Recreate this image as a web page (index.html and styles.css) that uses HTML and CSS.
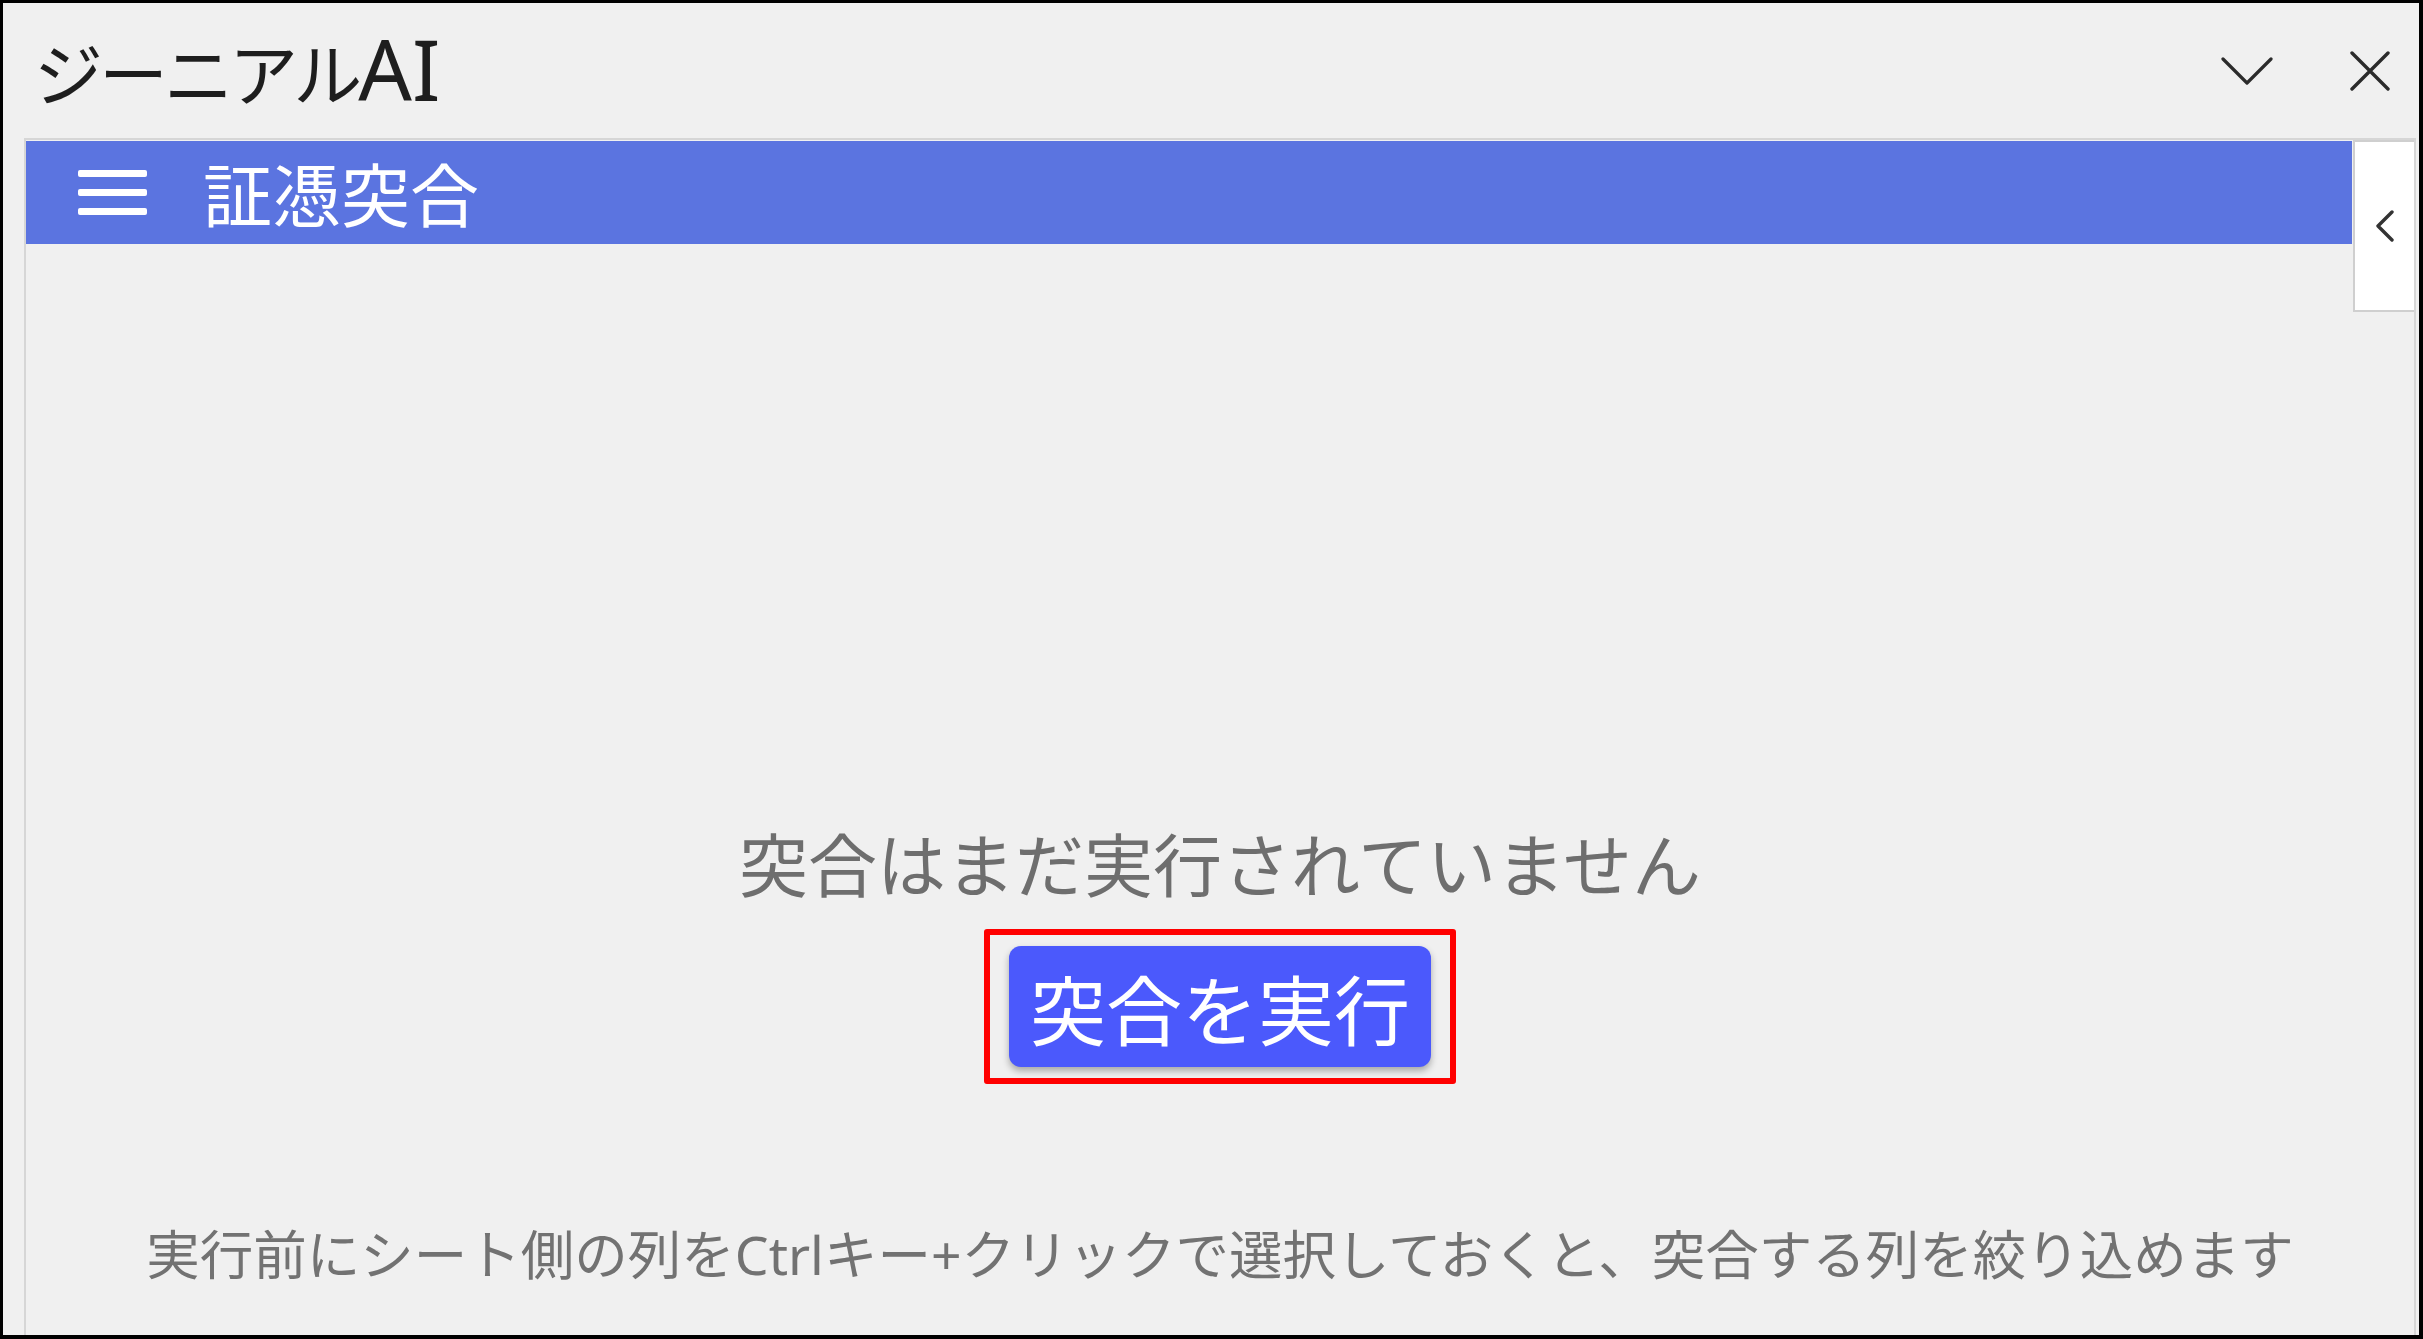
FILE: index.html
```html
<!DOCTYPE html>
<html lang="ja">
<head>
  <meta charset="UTF-8">
  <meta name="viewport" content="width=device-width, initial-scale=1.0">
  <title>ジーニアルAI - 証憑突合</title>
  <link rel="stylesheet" href="styles.css">
</head>
<body>

  <div class="window">
    <!-- Task pane title -->
    <div class="titlebar">
      <div class="app-title">ジーニアル<span class="latin">AI</span></div>
      <div class="title-actions">
        <button class="icon-btn" aria-label="メニュー">
          <svg width="52" height="28" viewBox="0 0 52 28">
            <path d="M2 2 L26 26 L50 2" fill="none" stroke="#2b2b2b" stroke-width="3.2" stroke-linecap="round" stroke-linejoin="round"/>
          </svg>
        </button>
        <button class="icon-btn" aria-label="閉じる">
          <svg width="40" height="40" viewBox="0 0 40 40">
            <path d="M2 2 L38 38 M38 2 L2 38" fill="none" stroke="#2b2b2b" stroke-width="3.4" stroke-linecap="round"/>
          </svg>
        </button>
      </div>
    </div>

    <div class="panel">
      <div class="appbar">
        <svg class="hamburger" width="69" height="46" viewBox="0 0 69 46">
          <rect x="0" y="0" width="69" height="7" rx="2" fill="#fff"/>
          <rect x="0" y="19" width="69" height="7" rx="2" fill="#fff"/>
          <rect x="0" y="38" width="69" height="7" rx="2" fill="#fff"/>
        </svg>
        <h1>証憑突合</h1>
      </div>

      <!-- Collapse tab on the right edge -->
      <div class="side-tab">
        <svg width="20" height="32" viewBox="0 0 20 32">
          <path d="M17 2 L3 16 L17 30" fill="none" stroke="#333" stroke-width="3.4" stroke-linecap="round" stroke-linejoin="round"/>
        </svg>
      </div>

      <div class="content">
        <p class="empty">突合はまだ実行されていません</p>
        <div class="highlight">
          <button class="run-btn">突合を実行</button>
        </div>
        <p class="hint">実行前にシート側の列をCtrlキー+クリックで選択しておくと、突合する列を絞り込めます</p>
      </div>
    </div>
  </div>

</body>
</html>
```

FILE: styles.css
```css
/* Global Styles */
html, body {
  margin: 0;
  padding: 0;
  height: 100%;
}

body {
  font-family: "Noto Sans", "Noto Sans CJK JP", sans-serif;
  background: #f0f0f0;
  color: #222;
}

.window {
  box-sizing: border-box;
  height: 100vh;
  border: solid #000;
  border-width: 3px 4px 4px 3px;
  display: flex;
  flex-direction: column;
  overflow: hidden;
}

/* Title row */
.titlebar {
  height: 135px;
  flex-shrink: 0;
  display: flex;
  align-items: center;
  justify-content: space-between;
  padding: 0 29px 0 31px;
}

.app-title {
  font-family: "Noto Sans CJK JP", sans-serif;
  font-size: 69px;
  letter-spacing: -4px;
  line-height: 1;
  color: #1e1e1e;
  margin-top: -4px;
}

.app-title .latin {
  font-family: "Noto Sans", sans-serif;
  font-size: 84px;
  letter-spacing: 0;
}

.title-actions {
  display: flex;
  align-items: center;
  gap: 77px;
}

.icon-btn {
  background: none;
  border: none;
  padding: 0;
  display: flex;
  cursor: pointer;
}

/* Panel */
.panel {
  position: relative;
  flex: 1;
  margin: 0 3px 0 21px;
  border: 2px solid #d6d6d6;
  border-bottom: none;
  display: flex;
  flex-direction: column;
}

.appbar {
  height: 103px;
  margin: 1px 62px 0 0;
  background: #5b74e0;
  display: flex;
  align-items: center;
  padding-left: 52px;
  flex-shrink: 0;
}

.hamburger {
  flex-shrink: 0;
  margin-top: 1px;
}

.appbar h1 {
  margin: 0 0 0 56px;
  font-family: "Noto Sans CJK JP", sans-serif;
  font-size: 69px;
  font-weight: 400;
  line-height: 1;
  color: #fff;
}

.side-tab {
  position: absolute;
  top: 0;
  right: 0;
  width: 59px;
  height: 168px;
  background: #fff;
  border: 2px solid #cfcfcf;
  border-right: none;
  display: flex;
  align-items: center;
  justify-content: center;
}

/* Content */
.content {
  flex: 1;
  display: flex;
  flex-direction: column;
  align-items: center;
  padding-top: 580px;
}

.empty {
  margin: 0;
  font-size: 69px;
  line-height: 82px;
  color: #6e6e6e;
}

.highlight {
  margin-top: 23px;
  border: 6px solid #ff0000;
  border-radius: 3px;
  padding: 11px 19px;
}

.run-btn {
  height: 121px;
  padding: 0 21px;
  background: #4b59fc;
  color: #fff;
  border: none;
  border-radius: 12px;
  font-family: "Noto Sans CJK JP", sans-serif;
  font-size: 76px;
  line-height: 1;
  box-shadow: 0 4px 7px rgba(0, 0, 0, 0.3);
  cursor: pointer;
}

.hint {
  margin: 138px 0 0;
  font-size: 53.5px;
  line-height: 65px;
  color: #727272;
  white-space: nowrap;
}
```
